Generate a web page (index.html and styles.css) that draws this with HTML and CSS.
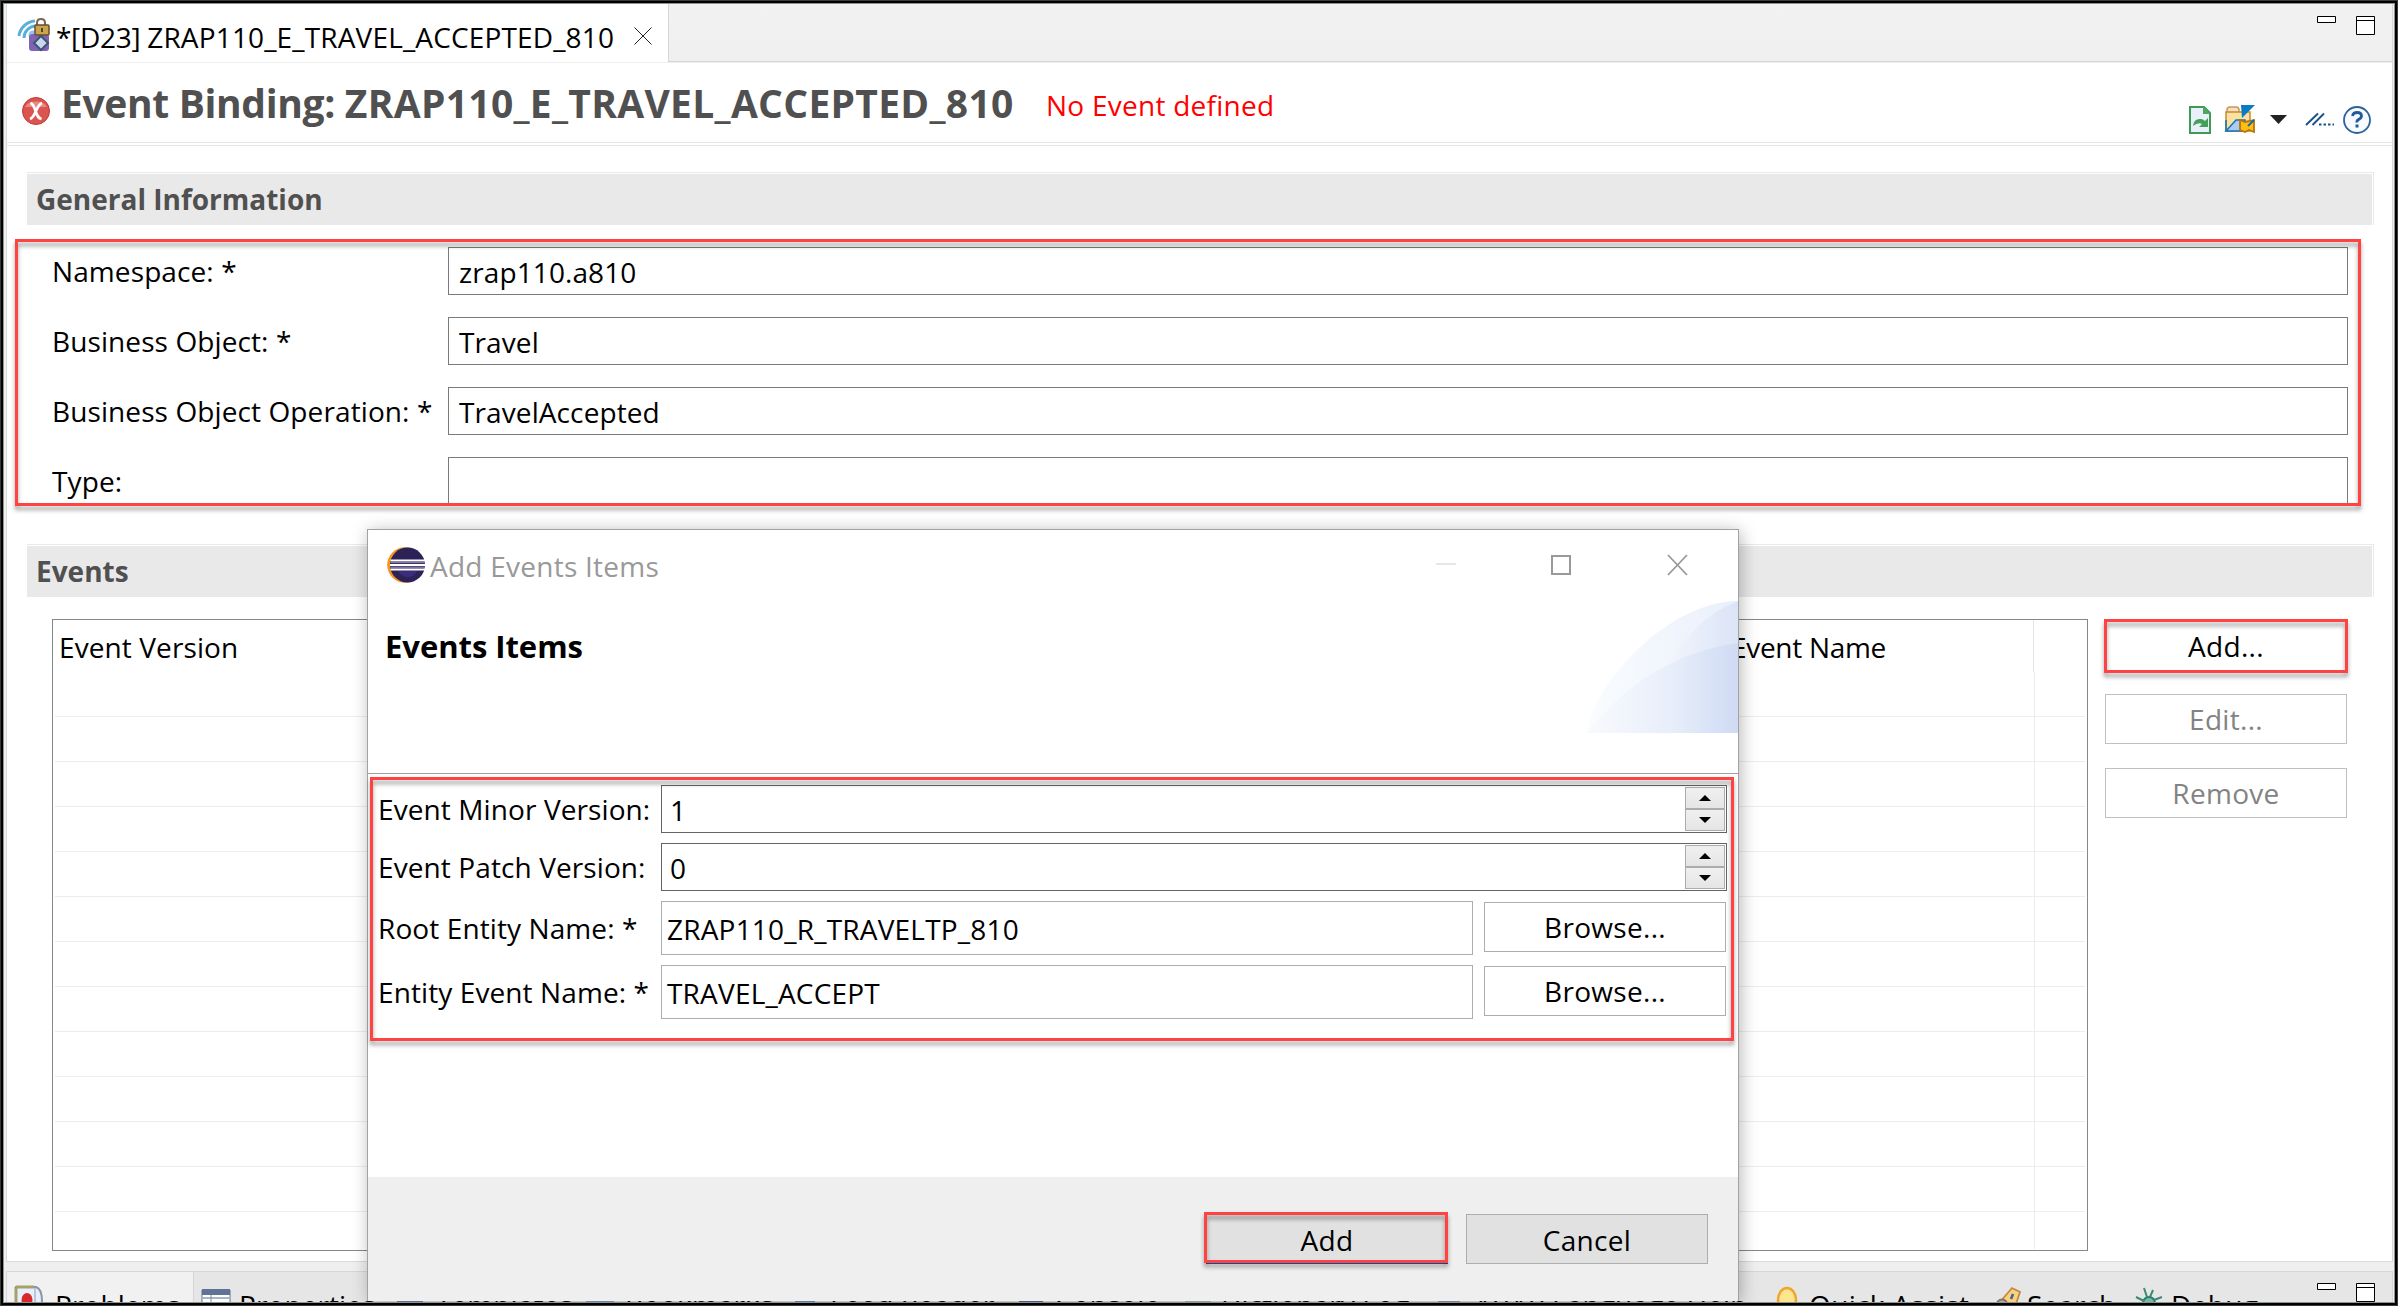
FILE: index.html
```html
<!DOCTYPE html>
<html lang="en">
<head>
<meta charset="utf-8">
<title>Event Binding</title>
<link rel="stylesheet" href="styles.css">
</head>
<body>
<div class="app">
  <main class="editor">
    <div class="tabbar">
      <div class="tab">
        <svg class="tab-icon" width="32" height="34" viewBox="0 0 32 34">
          <path d="M1 18A17 17 0 0 1 17 3M6 20A12 12 0 0 1 18 8" fill="none" stroke="#5aaede" stroke-width="3"/>
          <circle cx="15" cy="17" r="4.5" fill="#8cc8f0"/>
          <path d="M11 19q0-3 4-3h13q3 0 3 3v11q0 3-3 3H14q-3 0-3-3z" fill="#8262b4"/>
          <path d="M23 18l7 7-7 7-7-7z" fill="#c9d8ee" stroke="#3d5670" stroke-width="2"/>
          <path d="M19 8V5q0-4 4-4t4 4v3" fill="none" stroke="#7c6350" stroke-width="2"/>
          <rect x="17" y="7" width="14" height="10" rx="1" fill="#c9a552" stroke="#6a4d28" stroke-width="1.5"/>
          <path d="M24 10v4" stroke="#5c431c" stroke-width="2"/>
        </svg>
        <span class="tab-title"><span class="prefix">*[D23] </span><span class="name">ZRAP110_E_TRAVEL_ACCEPTED_810</span></span>
        <svg class="tab-close" width="18" height="18" viewBox="0 0 18 18"><path d="M.5.5l17 17M17.500.5l-17 17" stroke="#222" fill="none"/></svg>
      </div>
      <svg class="win-buttons" width="60" height="22" viewBox="0 0 60 22"><path d="M.5 .5h18v6h-18zM39.500 .5h18v18h-18zM39.500 4.500h18" fill="#fff" stroke="#000"/></svg>
    </div>
    <header class="form-head">
      <svg class="error-icon" width="30" height="30" viewBox="0 0 30 30"><circle cx="15" cy="15" r="13.500" fill="#dc5450" stroke="#c03a36"/><path d="M4 11a12 9 0 0 1 22 0z" fill="#e88a86"/><path d="M9.500 7q3 1 5 8t6 8M21 7q-3 1-6 8t-6 8" stroke="#fff" stroke-width="2.800" fill="none"/></svg>
      <h1><span class="prefix">Event Binding: </span><span class="name">ZRAP110_E_TRAVEL_ACCEPTED_810</span></h1>
      <span class="message">No Event defined</span>
      <div class="toolbar">
        <svg class="tool-doc" width="22" height="28" viewBox="0 0 22 28"><path d="M1 1h14l6 6v20H1z" fill="#e9f0fa" stroke="#3f9a53" stroke-width="2"/><path d="M14 0l8 8h-8z" fill="#4aa860"/><path d="M4 20q1-8 8-7 2 0 4 2l3-3v9h-9l3-3q-4-2-9 2z" fill="#45a057"/></svg>
        <svg class="tool-folder" width="31" height="29" viewBox="0 0 31 29"><path d="M2 7V5q0-3 3-3h6q3 0 3 3v2" fill="#f5dfc0" stroke="#c9975a" stroke-width="1.500"/><path d="M1 7h24v19H1z" fill="#fbe0a0" stroke="#c48a30" stroke-width="1.500"/><path d="M1 26l10-11h9v11z" fill="#a9cbf5" stroke="#1273b8" stroke-width="1.500"/><path d="M1 15v11" stroke="#1273b8" stroke-width="1.500"/><path d="M16 0h14L17 13z" fill="#0a7cc4"/><path d="M15 15l5 2 9-2v12l-5-2-4 2-5-2z" fill="#ffbe14" stroke="#b87408" stroke-width="1.800"/><path d="M29 15l-6 6" stroke="#0a6fb0" stroke-width="2"/></svg>
        <svg class="tool-arrow" width="17" height="9" viewBox="0 0 17 9"><path d="M0 0h17L8.500 9z" fill="#222"/></svg>
        <svg class="tool-lines" width="30" height="13" viewBox="0 0 30 13"><path d="M1 12L13 .5M7.500 12L19 .5" stroke="#1c5488" stroke-width="2"/><path d="M14 11.500h15" stroke="#1c4f85" stroke-width="2" stroke-dasharray="2.500 2"/></svg>
        <svg class="tool-help" width="28" height="28" viewBox="0 0 28 28"><circle cx="14" cy="14" r="13" fill="#f7fbff" stroke="#2b6399" stroke-width="1.800"/><path d="M9.500 10q.5-3.500 4.700-3.500T18.500 10q0 2-2.500 3.300T14 16.500" stroke="#215c98" stroke-width="2.800" fill="none"/><rect x="12.500" y="18.500" width="3" height="3" fill="#215c98"/></svg>
      </div>
    </header>

    <h2 class="section-title">General Information</h2>
    <div class="form">
      <label>Namespace: *</label><div class="field">zrap110.a810</div>
      <label>Business Object: *</label><div class="field">Travel</div>
      <label>Business Object Operation: *</label><div class="field">TravelAccepted</div>
      <label>Type:</label><div class="field"></div>
    </div>

    <h2 class="section-title">Events</h2>
    <div class="events">
      <div class="table">
        <div class="thead"><div class="col-version">Event Version</div><div class="col-name">Event Name</div></div>
        <div class="row"></div><div class="row"></div><div class="row"></div><div class="row"></div>
        <div class="row"></div><div class="row"></div><div class="row"></div><div class="row"></div>
        <div class="row"></div><div class="row"></div><div class="row"></div><div class="row"></div>
        <div class="row last"></div>
      </div>
      <div class="actions">
        <div class="button primary">Add...</div>
        <div class="button off">Edit...</div>
        <div class="button off">Remove</div>
      </div>
    </div>
  </main>

  <footer class="views">
    <div class="view active"><svg width="28" height="32" viewBox="0 0 28 32"><path d="M1 1h20q6 2 6 14v15H1z" fill="#e6effa" stroke="#8b94a8" stroke-width="2"/><path d="M1 1h18M1 1v29" stroke="#a79f6c" stroke-width="3"/><path d="M20 2v28" stroke="#b5c6e0" stroke-width="2"/><ellipse cx="12" cy="14" rx="5.500" ry="7" fill="#d8282c"/></svg><span>Problems</span></div>
    <div class="view"><svg width="28" height="28" viewBox="0 0 28 28"><path d="M0 1h28v26H0z" fill="#fff" stroke="#5c7098"/><path d="M0 0h28v6H0z" fill="#5f7396"/><path d="M0 9h28M0 15h28M0 21h28" stroke="#a9b4c6" stroke-width="2"/><path d="M9 6v22" stroke="#7d8dab"/></svg><span>Properties</span></div>
    <div class="view"><svg width="28" height="28" viewBox="0 0 28 28"><path d="M0 8h26v16H0z" fill="#6f87b0"/></svg><span>Templates</span></div>
    <div class="view"><svg width="28" height="28" viewBox="0 0 28 28"><path d="M0 8h28v16H0z" fill="#7f9fc8"/></svg><span>Bookmarks</span></div>
    <div class="view"><svg width="28" height="28" viewBox="0 0 28 28"><path d="M4 8h20v16H4z" fill="#6f90c4"/></svg><span>Feed Reader</span></div>
    <div class="view"><svg width="28" height="28" viewBox="0 0 28 28"><path d="M3 8h24v16H3z" fill="#56699c"/></svg><span>Console</span></div>
    <div class="view"><svg width="28" height="28" viewBox="0 0 28 28"><path d="M3 8h26v16H3z" fill="#a9bcc4"/></svg><span>Dictionary Log</span></div>
    <div class="view"><svg width="28" height="28" viewBox="0 0 28 28"><path d="M3 8h22v16H3z" fill="#8f9bb0"/></svg><span>ABAP Language Help</span></div>
    <div class="view"><svg width="28" height="28" viewBox="0 0 28 28"><ellipse cx="17" cy="12" rx="9" ry="12" fill="#fbe58e" stroke="#efa62c" stroke-width="2.500"/></svg><span class="wide">Quick Assist</span></div>
    <div class="view"><svg width="28" height="28" viewBox="0 0 28 28"><path d="M12 14L24 0l8 4-4 12-8 6z" fill="#f8d27c" stroke="#c08a42" stroke-width="1.800"/><circle cx="14" cy="17" r="5.500" fill="#b9aba0" stroke="#857468" stroke-width="2"/><path d="M25 6l-2 5" stroke="#3d63a0" stroke-width="2.500"/></svg><span>Search</span></div>
    <div class="view"><svg width="28" height="28" viewBox="0 0 28 28"><circle cx="17" cy="15" r="6" fill="#79b8a0" stroke="#2a7a70" stroke-width="2"/><path d="M12 0l3 9M21 2l-3 7M4 9l8 4M22 12l8-3M3 15h8M23 15h8" stroke="#3c8a72" stroke-width="2"/></svg><span class="wide">Debug</span></div>
    <svg class="view-buttons" width="60" height="22" viewBox="0 0 60 22"><path d="M.5 .5h18v6h-18zM39.500 .5h18v18h-18zM39.500 4.500h18" fill="#fff" stroke="#000"/></svg>
  </footer>

  <div class="dialog">
    <div class="titlebar">
      <svg class="eclipse" width="38" height="36" viewBox="0 0 38 36"><circle cx="18" cy="18" r="17.800" fill="#f7941e"/><circle cx="20.500" cy="18" r="17.500" fill="#2c2255"/><path d="M11 24h19q-3 6-9 6t-10-6z" fill="#3c2c7c"/><path d="M3.500 13.500h34.500M3 18h35M3.500 22.500h34.500" stroke="#fff" stroke-width="2"/><path d="M3.500 15.500h34.500M3.500 20.300h34.500" stroke="#7d75a0" stroke-width="1.500"/></svg>
      <span class="dialog-name">Add Events Items</span>
      <svg class="dialog-buttons" width="254" height="22" viewBox="0 0 254 22"><path d="M1 10h20" stroke="#e6e6e6" stroke-width="2"/><path d="M117 2h18v18h-18z" fill="none" stroke="#999" stroke-width="2"/><path d="M233 1l19 20M252 1l-19 20" stroke="#999" stroke-width="1.800"/></svg>
    </div>
    <div class="banner">
      <h3>Events Items</h3>
      <svg class="swoosh" width="151" height="132" viewBox="0 0 151 132">
        <defs>
          <linearGradient id="g1"><stop offset="0" stop-color="#fafcfe"/><stop offset="1" stop-color="#e9effb"/></linearGradient>
          <linearGradient id="g2"><stop offset="0" stop-color="#f3f6fd"/><stop offset="1" stop-color="#dbe4f6"/></linearGradient>
          <linearGradient id="g3"><stop offset="0" stop-color="#f9fafd"/><stop offset=".55" stop-color="#e8eefa"/><stop offset="1" stop-color="#cfdbf4"/></linearGradient>
        </defs>
        <path d="M0 132C5 85 80 0 151 0v132z" fill="url(#g1)"/>
        <path d="M75 80Q100 20 151 0v80z" fill="url(#g2)"/>
        <path d="M0 132Q60 55 151 42v90z" fill="url(#g3)"/>
      </svg>
    </div>
    <div class="dialog-form">
      <label>Event Minor Version:</label>
      <div class="spinner"><span>1</span><div class="spin"><i><svg width="12" height="6" viewBox="0 0 12 6"><path d="M0 6h12L6 0z"/></svg></i><i><svg width="12" height="6" viewBox="0 0 12 6"><path d="M0 0h12L6 6z"/></svg></i></div></div>
      <label>Event Patch Version:</label>
      <div class="spinner"><span>0</span><div class="spin"><i><svg width="12" height="6" viewBox="0 0 12 6"><path d="M0 6h12L6 0z"/></svg></i><i><svg width="12" height="6" viewBox="0 0 12 6"><path d="M0 0h12L6 6z"/></svg></i></div></div>
      <label class="tall">Root Entity Name: *</label>
      <div class="entry">ZRAP110_R_TRAVELTP_810</div><div class="button">Browse...</div>
      <label class="tall">Entity Event Name: *</label>
      <div class="entry">TRAVEL_ACCEPT</div><div class="button">Browse...</div>
    </div>
    <div class="dialog-foot">
      <div class="button solid default">Add</div>
      <div class="button solid">Cancel</div>
    </div>
  </div>

  <div class="mark mark-info"></div>
  <div class="mark mark-add"></div>
  <div class="mark mark-fields"></div>
  <div class="mark mark-confirm"></div>
  <div class="frame"></div>
</div>
</body>
</html>
```
FILE: styles.css
```css
* { box-sizing: border-box; }
body {
  margin: 0;
  font: 28px/40px "Open Sans", "Noto Sans", sans-serif;
  letter-spacing: .1px;
  color: #000;
}
h1, h2, h3 { margin: 0; font-weight: 700; }
svg { display: block; flex: none; overflow: visible; }
span, label, h1, h3 { white-space: nowrap; }

.app {
  position: relative;
  width: 2398px;
  height: 1306px;
  padding: 4px 5px 4px 6px;
  overflow: hidden;
  background: #efefef;
}
.frame {
  position: absolute;
  inset: 0;
  box-shadow: inset 0 0 0 1px #383c38, inset 0 0 0 3px #000, inset 0 0 0 4px #8f9392;
}

/* editor */
.editor {
  height: 1258px;
  border: solid #d9d9d9;
  border-width: 0 1px 1px;
  background: #fff;
}
.tabbar {
  display: flex;
  justify-content: space-between;
  height: 59px;
  border-bottom: 1px solid #eee;
  background: linear-gradient(#f2f2f2, #efefef);
  box-shadow: inset 0 -1px #d6d6d6;
}
.tab {
  display: flex;
  align-items: flex-start;
  width: 662px;
  height: 58px;
  border-right: 1px solid #d6d6d6;
  padding-left: 11px;
  background: #fff;
}
.tab-icon { margin-top: 14px; }
.tab-title { width: 562px; margin: 13px 0 0 6px; }
.tab-title .prefix { letter-spacing: -.3px; }
.tab-title .name { letter-spacing: .15px; }
.tab-close { margin: 23px 0 0 16px; }
.win-buttons { margin: 12px 15px 0 0; }

.form-head {
  display: flex;
  align-items: center;
  height: 83px;
  border: solid #e6e6e6;
  border-width: 0 0 1px;
  padding: 0 21px 2px 14px;
  box-shadow: inset 0 -2px #fff, inset 0 -3px #e6e6e6;
}
.error-icon { margin-top: 16px; }
h1 { width: 955px; margin-left: 10px; font-size: 39px; line-height: 54px; color: #505050; }
h1 .prefix { letter-spacing: -.35px; }
h1 .name { letter-spacing: .3px; }
.message { margin: 4px 0 0 30px; letter-spacing: .25px; color: #f00; }
.toolbar { display: flex; align-items: center; margin: 33px 0 0 auto; }
.tool-folder { margin-left: 14px; }
.tool-arrow { margin-left: 14px; }
.tool-lines { margin-left: 18px; }
.tool-help { margin-left: 8px; }

.section-title {
  height: 53px;
  margin: 26px 18px 0 20px;
  border-top: 1px solid #e9e9e9;
  border-right: 1px solid #e9e9e9;
  padding-left: 9px;
  background: #e9e9e9;
  box-shadow: inset 0 1px #fff, inset -1px 0 #fff;
  font-size: 28px;
  line-height: 53px;
  letter-spacing: 0;
  color: #505050;
}
.form {
  display: grid;
  grid-template-columns: 396px 1900px;
  grid-auto-rows: 48px;
  row-gap: 22px;
  height: 281px;
  margin-bottom: 38px;
  padding: 22px 0 0 45px;
  overflow: hidden;
}
label { line-height: 48px; }
.field {
  border: 1px solid #7a7a7a;
  padding-left: 10px;
  line-height: 48px;
}
.form + .section-title { margin-top: 0; }

.events { display: flex; gap: 16px; padding: 22px 0 0 45px; }
.table {
  width: 2036px;
  height: 632px;
  border: 1px solid #828790;
}
.thead { display: flex; height: 52px; line-height: 55px; }
.col-version { width: 1678px; padding-left: 6px; }
.col-name { width: 303px; border-right: 1px solid #e5e5e5; box-shadow: inset 0 1px #fff; letter-spacing: -.3px; }
.row {
  height: 45px;
  margin: 0 2px;
  border-bottom: 1px solid #ededed;
  background: linear-gradient(#ededed, #ededed) 1979px 0 / 1px 100% no-repeat;
}
.row.last { height: 37px; border: 0; }
.actions { display: flex; flex-direction: column; gap: 24px; width: 244px; padding: 0 1px; }
.button {
  height: 50px;
  border: 1px solid #adadad;
  text-align: center;
  line-height: 49px;
  letter-spacing: .3px;
}
.button.primary { height: 51px; margin-top: 2px; margin-bottom: -2px; line-height: 48px; }
.button.off { border-color: #bfbfbf; color: #838383; }

/* view tabs */
.views {
  display: grid;
  grid-template-columns: 187px 195px 189px 205px 225px 166px 253px 335px 218px 144px 193px 70px;
  height: 66px;
  margin-top: 9px;
  border: 1px solid #d6d6d6;
  background: #e6e6e6;
}
.view { display: flex; padding: 15px 0 0 8px; }
.view svg { margin-top: 1px; }
.view span { margin: -2px 0 0 11px; }
.view .wide { letter-spacing: .35px; }
.view.active { border-right: 1px solid #d6d6d6; background: #f1f1f1; }
.view.active svg { margin-top: -1px; }
.view.active span { margin-left: 12px; }
.view:nth-child(2) svg { margin-top: 2px; }
.view:nth-child(2) span { margin-left: 9px; }
.view-buttons { margin-top: 11px; }

/* dialog */
.dialog {
  position: absolute;
  left: 367px;
  top: 529px;
  width: 1372px;
  height: 772px;
  border: solid #a2a2a2;
  border-width: 1px 1px 0;
  background: #fff;
  box-shadow: 2px 2px 16px rgba(0, 0, 0, .28);
}
.titlebar { display: flex; height: 71px; padding: 17px 49px 0 19px; }
.dialog-name { margin: -1px 0 0 5px; letter-spacing: .25px; color: #999; }
.dialog-buttons { margin: 7px 0 0 auto; }
.banner {
  display: flex;
  justify-content: space-between;
  height: 173px;
  border-bottom: 1px solid #a0a0a0;
}
h3 { margin: 24px 0 0 17px; font-size: 31px; line-height: 42px; letter-spacing: -.05px; }
.dialog-form {
  display: grid;
  grid-template-columns: 283px 812px 242px;
  grid-template-rows: 48px 48px 54px 54px;
  column-gap: 11px;
  row-gap: 10px;
  height: 403px;
  padding: 11px 0 0 10px;
}
.dialog-form label { grid-column: 1; line-height: 48px; }
.dialog-form .tall { line-height: 55px; }
.spinner {
  grid-column: 2 / 4;
  display: flex;
  justify-content: space-between;
  margin-left: -11px;
  width: 1066px;
  border: 1px solid #646464;
  padding: 1px 1px 1px 8px;
  line-height: 46px;
}
.spin { width: 40px; }
.spin i {
  display: flex;
  align-items: center;
  justify-content: center;
  height: 22px;
  border: 1px solid #acacac;
  background: linear-gradient(#f0f0f0, #e5e5e5);
}
.entry {
  width: 812px;
  margin-left: -11px;
  border: 1px solid #abadb3;
  padding-left: 5px;
  line-height: 54px;
  letter-spacing: .2px;
}
.dialog-form .button { width: 242px; margin: 1px 0 0 -11px; }
.dialog-foot {
  display: flex;
  justify-content: flex-end;
  gap: 18px;
  height: 124px;
  padding: 37px 30px 0 0;
  background: #efefef;
}
.dialog-foot .button { width: 242px; }
.button.solid { background: #e1e1e1; line-height: 51px; }
.button.default { border-color: #0060b8; }

/* highlight frames */
.mark {
  position: absolute;
  border: 3px solid #ff4343;
  filter: drop-shadow(0 4px 2px rgba(0, 0, 0, .38));
}
.mark-info { left: 15px; top: 239px; width: 2346px; height: 267px; }
.mark-add { left: 2104px; top: 619px; width: 244px; height: 54px; }
.mark-fields { left: 370px; top: 777px; width: 1364px; height: 264px; }
.mark-confirm { left: 1204px; top: 1212px; width: 244px; height: 51px; }
```
